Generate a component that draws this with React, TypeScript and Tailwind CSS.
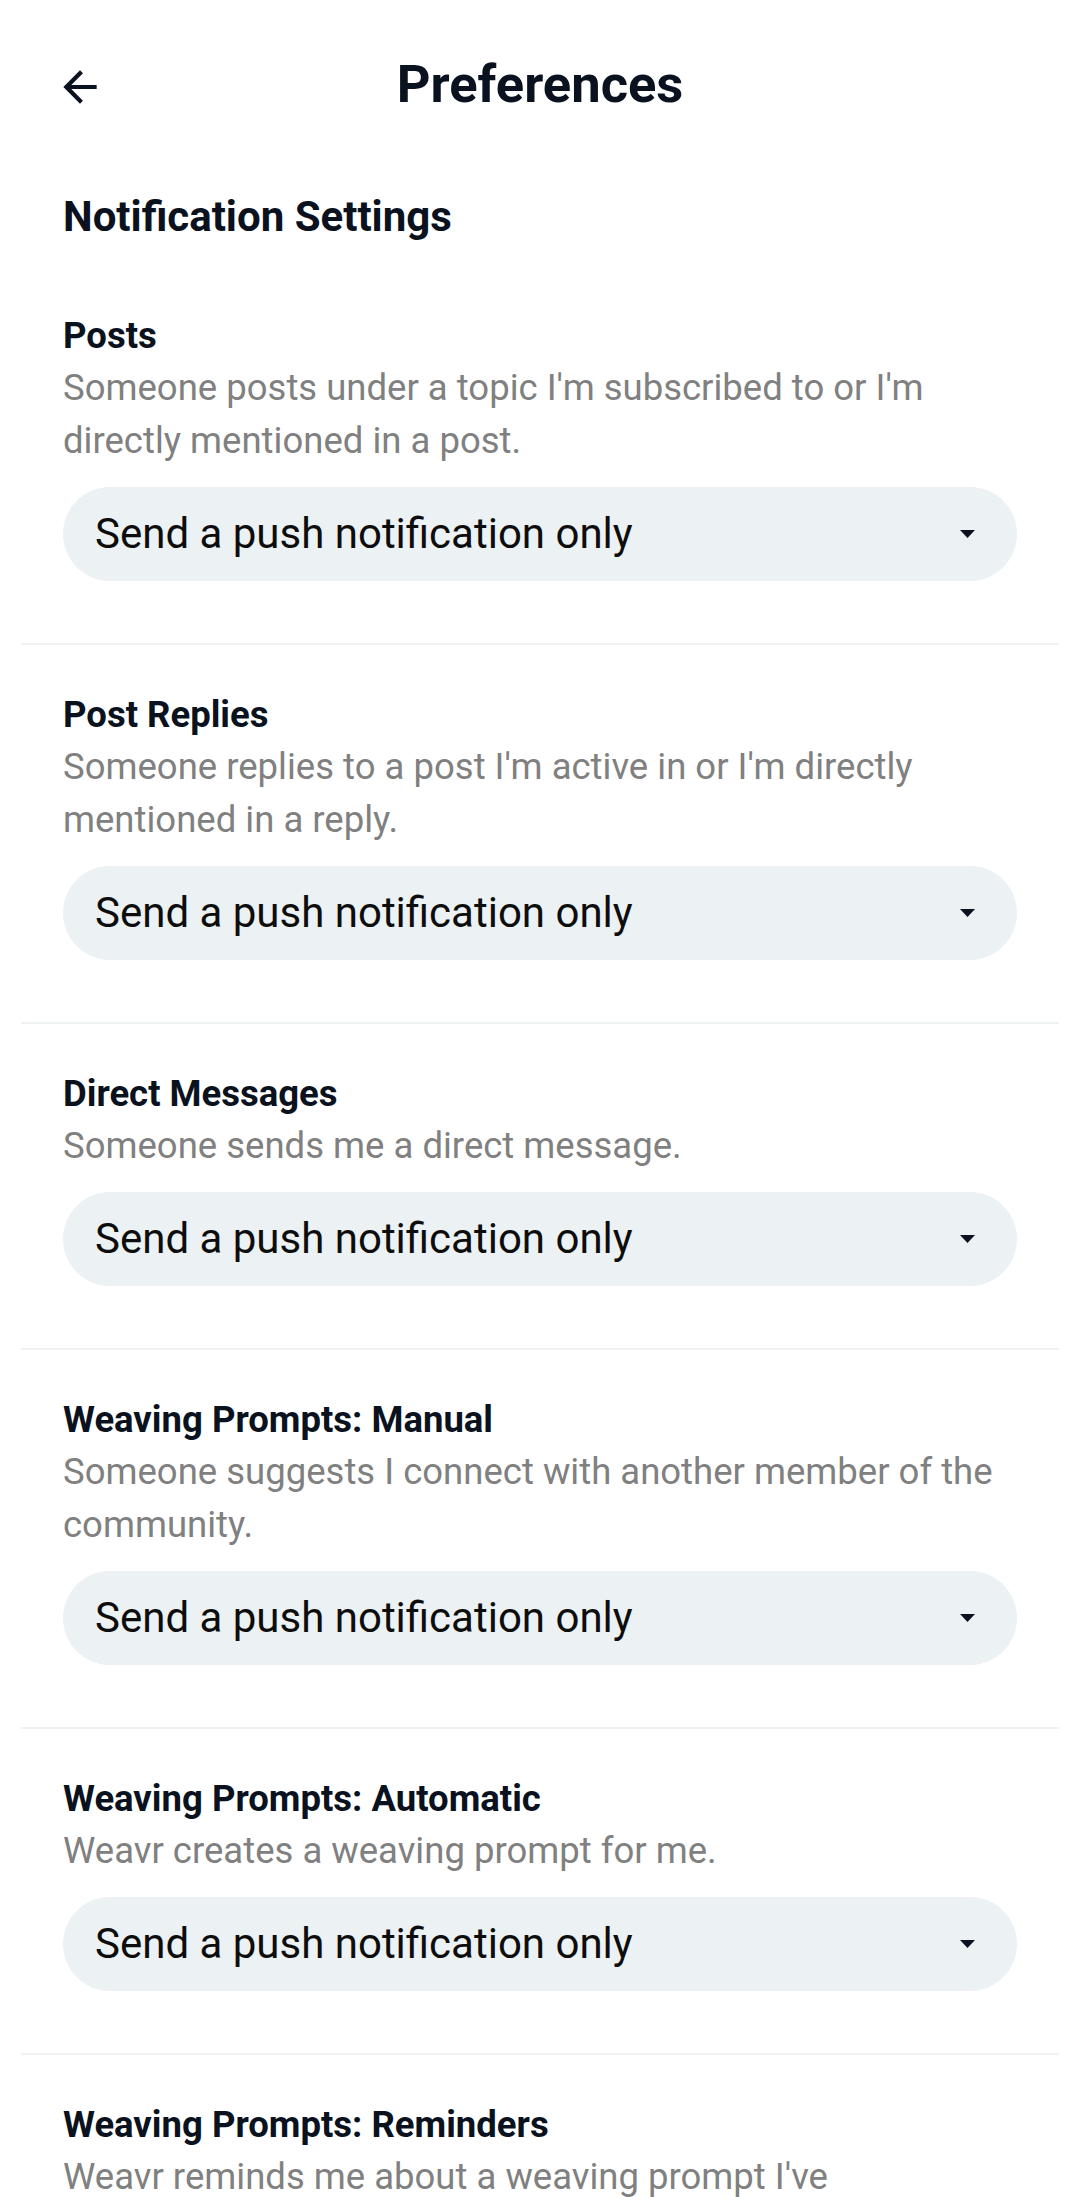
import { useState } from "react";

type Section = {
  title: string;
  description: string;
};

const sections: Section[] = [
  {
    title: "Posts",
    description:
      "Someone posts under a topic I'm subscribed to or I'm directly mentioned in a post.",
  },
  {
    title: "Post Replies",
    description:
      "Someone replies to a post I'm active in or I'm directly mentioned in a reply.",
  },
  {
    title: "Direct Messages",
    description: "Someone sends me a direct message.",
  },
  {
    title: "Weaving Prompts: Manual",
    description:
      "Someone suggests I connect with another member of the community.",
  },
  {
    title: "Weaving Prompts: Automatic",
    description: "Weavr creates a weaving prompt for me.",
  },
  {
    title: "Weaving Prompts: Reminders",
    description:
      "Weavr reminds me about a weaving prompt I've acknowledged but not acted on.",
  },
];

function BackArrow() {
  return (
    <svg width="50" height="50" viewBox="0 0 24 24" fill="#0a1220">
      <path d="M20 11H7.83l5.59-5.59L12 4l-8 8 8 8 1.41-1.41L7.83 13H20v-2z" />
    </svg>
  );
}

function SelectPill({ value }: { value: string }) {
  return (
    <button className="flex h-[94px] w-full items-center justify-between rounded-full bg-[#ecf1f3] pl-[32px] pr-[42px] text-left">
      <span className="text-[42px] leading-none text-[#0d0d0d]">{value}</span>
      <svg width="15" height="8" viewBox="0 0 15 8" fill="#0a1220">
        <path d="M0 0h15L7.5 8z" />
      </svg>
    </button>
  );
}

export default function App() {
  const [choice] = useState("Send a push notification only");

  return (
    <main className="min-h-screen bg-white font-['Roboto',sans-serif] text-[#0a1220]">
      {/* Header */}
      <header className="grid h-[168px] grid-cols-[1fr_auto_1fr] items-center">
        <div className="pl-[55px] pt-[6px]">
          <BackArrow />
        </div>
        <h1 className="text-[52.5px] font-bold leading-none">Preferences</h1>
        <div />
      </header>

      <h2 className="mt-[21px] px-[63px] text-[42px] font-bold leading-[56px]">
        Notification Settings
      </h2>

      <div className="mt-[21px]">
        {sections.map((s, i) => (
          <div key={s.title}>
            {i > 0 && <div className="mx-[21px] h-[2px] bg-[#eef2f2]" />}
            <div className="px-[63px] pb-[62px] pt-[44px]">
              <h3 className="text-[36.5px] font-bold leading-[51px]">{s.title}</h3>
              <p className="text-[36.5px] leading-[53px] text-[#808080]">
                {s.description}
              </p>
              <div className="mt-[20px]">
                <SelectPill value={choice} />
              </div>
            </div>
          </div>
        ))}
      </div>
    </main>
  );
}
